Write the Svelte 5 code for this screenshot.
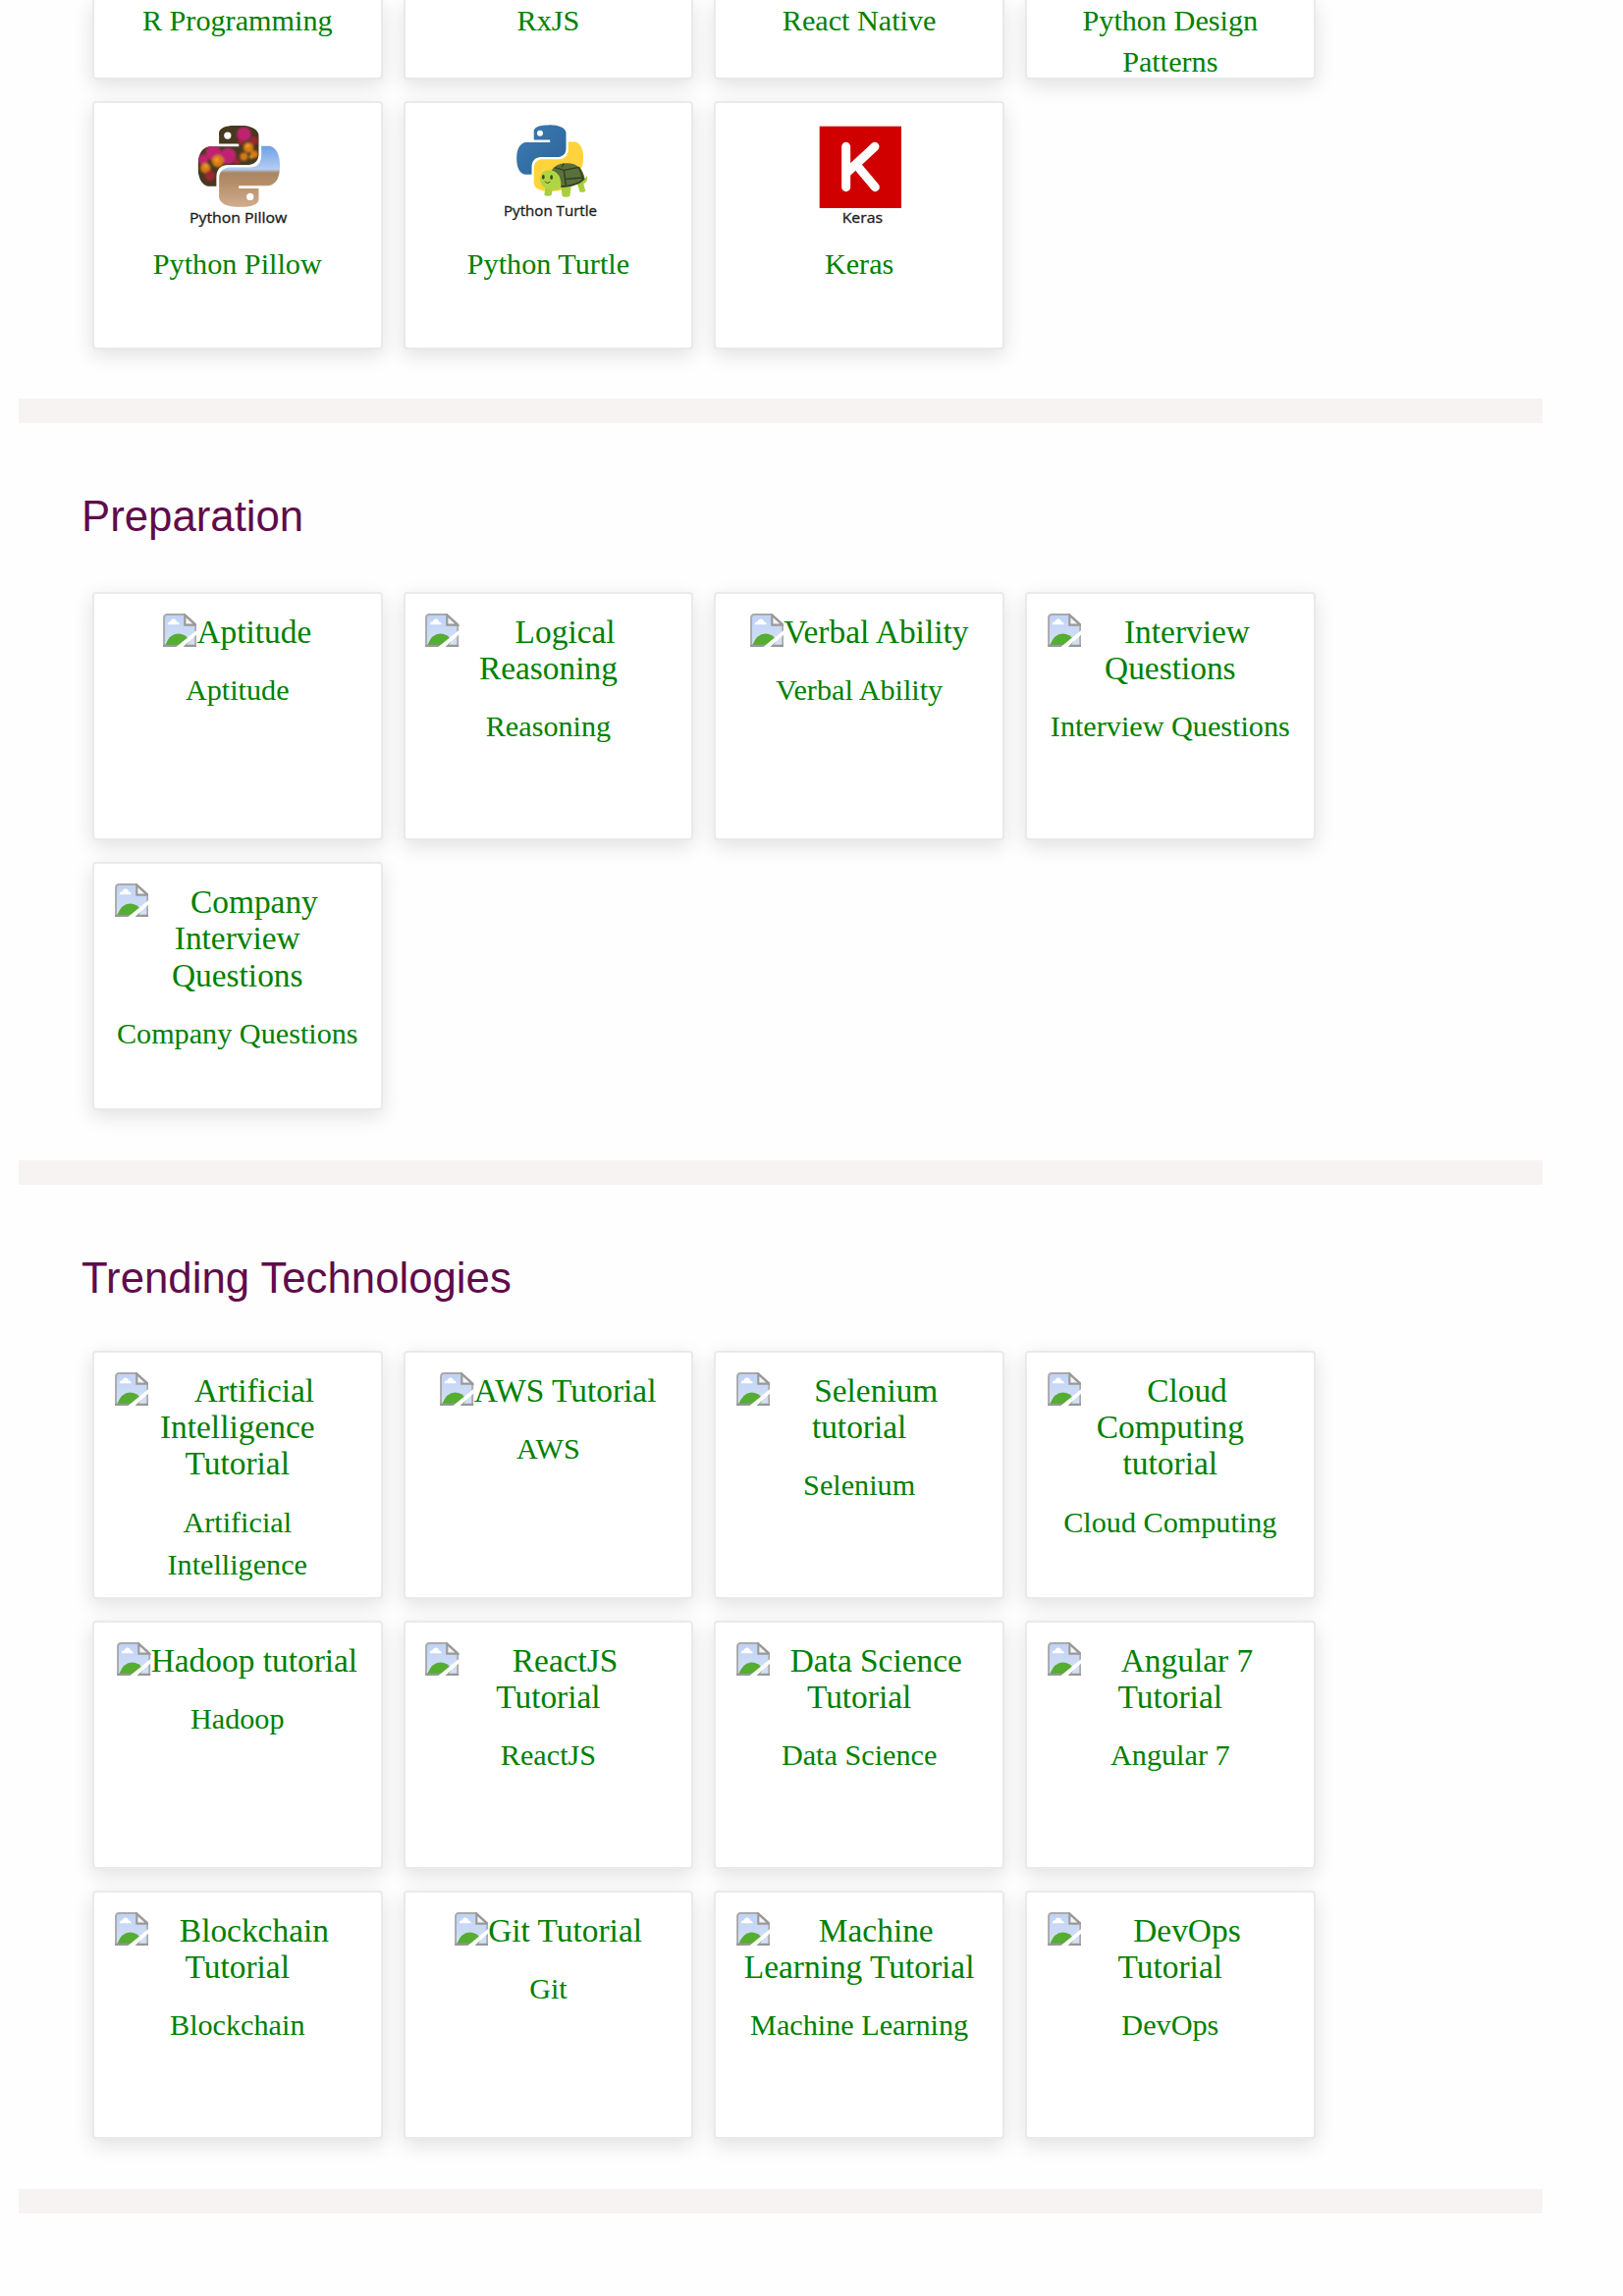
<script>
  const prep = [
    { alt: ['Aptitude'], name: ['Aptitude'] },
    { alt: ['Logical', 'Reasoning'], name: ['Reasoning'] },
    { alt: ['Verbal Ability'], name: ['Verbal Ability'] },
    { alt: ['Interview', 'Questions'], name: ['Interview Questions'] },
    { alt: ['Company', 'Interview', 'Questions'], name: ['Company Questions'] }
  ];
  const trending = [
    { alt: ['Artificial', 'Intelligence', 'Tutorial'], name: ['Artificial', 'Intelligence'] },
    { alt: ['AWS Tutorial'], name: ['AWS'] },
    { alt: ['Selenium', 'tutorial'], name: ['Selenium'] },
    { alt: ['Cloud', 'Computing', 'tutorial'], name: ['Cloud Computing'] },
    { alt: ['Hadoop tutorial'], name: ['Hadoop'] },
    { alt: ['ReactJS', 'Tutorial'], name: ['ReactJS'] },
    { alt: ['Data Science', 'Tutorial'], name: ['Data Science'] },
    { alt: ['Angular 7', 'Tutorial'], name: ['Angular 7'] },
    { alt: ['Blockchain', 'Tutorial'], name: ['Blockchain'] },
    { alt: ['Git Tutorial'], name: ['Git'] },
    { alt: ['Machine', 'Learning Tutorial'], name: ['Machine Learning'] },
    { alt: ['DevOps', 'Tutorial'], name: ['DevOps'] }
  ];
  const sections = [
    { id: 'preparation', title: 'Preparation', items: prep },
    { id: 'trending', title: 'Trending Technologies', items: trending }
  ];
  const snakeTop =
    'M14.25.18l.9.2.73.26.59.3.45.32.34.34.25.34.16.33.1.3.04.26.02.2-.01.13V8.5l-.05.63-.13.55-.21.46-.26.38-.3.31-.33.25-.35.19-.35.14-.33.1-.3.07-.26.04-.21.02H8.77l-.69.05-.59.14-.5.22-.41.27-.33.32-.27.35-.2.36-.15.37-.1.35-.07.32-.04.27-.02.21v3.06H3.17l-.21-.03-.28-.07-.32-.12-.35-.18-.36-.26-.36-.36-.35-.46-.32-.59-.28-.73-.21-.88-.14-1.05-.05-1.23.06-1.22.16-1.04.24-.87.32-.71.36-.57.4-.44.42-.33.42-.24.4-.16.36-.1.32-.05.24-.01h.16l.06.01h8.16v-.83H6.18l-.01-2.75-.02-.37.05-.34.11-.31.17-.28.25-.26.31-.23.38-.2.44-.18.51-.15.58-.12.64-.1.71-.06.77-.04.84-.02 1.27.05z';
  const snakeBottom =
    'M21.04 6.11l.28.06.32.12.35.18.36.27.36.35.35.47.32.59.28.73.21.88.14 1.04.05 1.23-.06 1.23-.16 1.04-.24.86-.32.71-.36.57-.4.45-.42.33-.42.24-.4.16-.36.09-.32.05-.24.02-.16-.01h-8.22v.82h5.84l.01 2.76.02.36-.05.34-.11.31-.17.29-.25.25-.31.24-.38.2-.44.17-.51.15-.58.13-.64.09-.71.07-.77.04-.84.01-1.27-.04-1.07-.14-.9-.2-.73-.25-.59-.3-.45-.33-.34-.34-.25-.34-.16-.33-.1-.3-.04-.25-.02-.2.01-.13v-5.34l.05-.64.13-.54.21-.46.26-.38.3-.32.33-.24.35-.2.35-.14.33-.1.3-.06.26-.04.21-.02.13-.01h5.84l.69-.05.59-.14.5-.21.41-.28.33-.32.27-.35.2-.36.15-.36.1-.35.07-.32.04-.28.02-.21V6.07h2.09l.14.01z';
</script>

{#snippet lines(list)}
  {#each list as line, i}{#if i > 0}<br />{/if}{line}{/each}
{/snippet}

{#snippet missing()}
  <svg class="missing" viewBox="0 0 16 16" aria-hidden="true">
    <defs>
      <linearGradient id="sky" x1="0" y1="0" x2="0" y2="1">
        <stop offset="0" stop-color="#bfd2f6" /><stop offset="1" stop-color="#d6e1f5" />
      </linearGradient>
    </defs>
    <path d="M2 .3h8.200l5.500 4.900v10.800H.3V2Q.3.3 2 .3z" fill="url(#sky)" />
    <path d="M2.200 5.300q0-1.300 1.300-1.400Q4 2.300 5.300 2.600q1.100.2 1.300 1.400 1.200.1 1.200 1.300z" fill="#fff" />
    <path d="M1 15.200q2.200-5.600 6.200-5.600 3.400 0 5.400 3.200L11 15.200z" fill="#55ad32" />
    <path d="M.5 15.500V2Q.5.500 2 .5h8.300l5.200 4.700V15.500z" fill="none" stroke="#aaa" stroke-width=".9" />
    <path d="M.1 15.400h15.800" stroke="#979797" stroke-width="1.200" />
    <path d="M10.400.8v4.600h5z" fill="#f4f4f4" stroke="#999" stroke-width="1" />
    <path d="M6.100 16h3.300L16 10V7.900z" fill="#fff" />
  </svg>
{/snippet}

<main>
  <section class="libraries">
    <div class="grid">
      <a class="card cut"><p>R Programming</p></a>
      <a class="card cut"><p>RxJS</p></a>
      <a class="card cut"><p>React Native</p></a>
      <a class="card cut"><p>Python Design<br />Patterns</p></a>

      <a class="card pic">
        <svg class="logo" viewBox="0 0 390 360">
          <defs>
            <clipPath id="snake-top"><path d={snakeTop} /></clipPath>
            <linearGradient id="desert" x1="0" y1="0" x2="0" y2="1">
              <stop offset="0" stop-color="#6f9fe6" />
              <stop offset=".38" stop-color="#b4cdf0" />
              <stop offset=".44" stop-color="#a98664" />
              <stop offset=".65" stop-color="#b8916c" />
              <stop offset="1" stop-color="#d0ad90" />
            </linearGradient>
            <filter id="petals" x="-20%" y="-20%" width="140%" height="140%"><feGaussianBlur stdDeviation=".25" /></filter>
          </defs>
          <g transform="translate(74 38) scale(10.400)">
            <g clip-path="url(#snake-top)">
              <rect width="24" height="18" fill="#46391f" />
              <g filter="url(#petals)">
                <g fill="#c0246f">
                  <circle cx="13.500" cy="2.600" r="2.100" /><circle cx="4.500" cy="8" r="2.300" />
                  <circle cx="8.800" cy="9" r="2.400" /><circle cx="1.500" cy="10" r="1.500" />
                </g>
                <g fill="#d87a17">
                  <circle cx="14.800" cy="6.500" r="1.500" /><circle cx="13.500" cy="9.200" r="1.200" />
                  <circle cx="5.800" cy="10.500" r="1.800" /><circle cx="2.200" cy="12.500" r="1.500" />
                  <circle cx="16.500" cy="8.500" r="1.100" />
                </g>
                <g fill="#9c2632">
                  <circle cx="3.500" cy="14.800" r="1.500" /><circle cx="16.500" cy="4.500" r="1.200" />
                  <circle cx="12.500" cy="5" r=".8" /><circle cx="11.500" cy="10.700" r=".9" />
                </g>
                <g fill="#f0a52b">
                  <circle cx="5.500" cy="10.200" r=".6" /><circle cx="14.600" cy="6" r=".6" />
                  <circle cx="2.300" cy="12" r=".5" /><circle cx="15.600" cy="9.300" r=".5" />
                </g>
              </g>
            </g>
            <path d={snakeBottom} fill="url(#desert)" />
            <circle cx="8.700" cy="3" r="1.050" fill="#fff" />
            <circle cx="15.300" cy="21" r="1.050" fill="#fff" />
          </g>
          <text x="48" y="336" textLength="298" lengthAdjust="spacingAndGlyphs">Python Pillow</text>
        </svg>
        <p>Python Pillow</p>
      </a>

      <a class="card pic">
        <svg class="logo" viewBox="0 0 390 360">
          <defs>
            <linearGradient id="blue" x1="0" y1="0" x2="1" y2="1">
              <stop offset="0" stop-color="#3b7cb3" /><stop offset="1" stop-color="#2c6498" />
            </linearGradient>
          </defs>
          <g transform="translate(18 -1)">
            <g transform="translate(82 38) scale(8.450)">
              <path d={snakeTop} fill="url(#blue)" />
              <path d={snakeBottom} fill="#ffd43b" />
              <circle cx="8.400" cy="3" r="1.050" fill="#fff" />
            </g>
            <path d="M170 226l-4 26q10 6 22 0l4-22zM217 228l4 28q12 5 23 0l4-30zM268 220l6 22q10 4 18-2l-6-22z" fill="#a8cf3c" />
            <path d="M270 212q18-2 27-20 4 18-12 27-10 5-20 2z" fill="#a8cf3c" />
            <path d="M188 178q14-25 48-23 46 1 54 48-14 22-70 26z" fill="#59703a" />
            <path d="M198 168l28 8 46-9M226 176l6 46M272 167l14 38M226 156l-6 10M232 203l52-4M216 226q46 0 72-24" fill="none" stroke="#303c20" stroke-width="4" />
            <path d="M153 203q2-26 28-27 28 2 34 28 6 22-3 31-14 5-32 0-27-7-27-32z" fill="#b0d544" />
            <ellipse cx="163" cy="197" rx="4" ry="7" fill="#3b4723" />
            <ellipse cx="188" cy="198" rx="4" ry="7" fill="#3b4723" />
            <path d="M168 210q7 10 16 1" fill="none" stroke="#3b4723" stroke-width="3" />
            <text x="42" y="315" textLength="285" lengthAdjust="spacingAndGlyphs">Python Turtle</text>
          </g>
        </svg>
        <p>Python Turtle</p>
      </a>

      <a class="card pic">
        <svg class="logo" viewBox="0 0 390 360">
          <g transform="translate(14 -2)">
            <rect x="60" y="43" width="250" height="250" fill="#d00000" />
            <path d="M141 105V229M229 105L145 183M172 160L230 229" fill="none" stroke="#fff" stroke-width="27" stroke-linecap="round" />
            <text x="129" y="338" textLength="124" lengthAdjust="spacingAndGlyphs">Keras</text>
          </g>
        </svg>
        <p>Keras</p>
      </a>
    </div>
  </section>
  <hr />

  {#each sections as s}
    <section class={s.id}>
      <h2>{s.title}</h2>
      <div class="grid">
        {#each s.items as item}
          <a class="card">
            <span class="alt" class:full={item.alt.length > 1}>{@render missing()}{@render lines(item.alt)}</span>
            <p>{@render lines(item.name)}</p>
          </a>
        {/each}
      </div>
    </section>
    <hr />
  {/each}
</main>

<style>
  :global(body) { background: #fefefe; }
  main {
    box-sizing: border-box;
    width: 1571px;
    height: 2339px;
    padding-left: 19px;
    overflow: hidden;
    font-family: 'Liberation Serif', serif;
    color: #008000;
  }
  section { box-sizing: border-box; padding-left: 64px; }
  .libraries { height: 406px; }
  .preparation { height: 751px; }
  .trending { height: 1023px; }
  hr { margin: 0; border: 0; height: 25px; background: #f7f3f3; }
  h2 {
    margin: 0;
    padding-top: 70px;
    height: 50px;
    font: 400 43.750px/50px 'Liberation Sans', sans-serif;
    color: #610b4b;
  }
  .grid {
    display: grid;
    grid-template-columns: repeat(4, 295.500px);
    column-gap: 21.200px;
    row-gap: 21.500px;
    padding-left: 11px;
  }
  .preparation .grid { padding-top: 51.500px; }
  .trending .grid { padding-top: 48.500px; }
  .card {
    box-sizing: border-box;
    height: 253.500px;
    padding: 20.500px 20.700px 0;
    border: 2px solid #ebe9e9;
    border-radius: 4px;
    background: #fff;
    box-shadow: 0 6px 20px rgba(0, 0, 0, 0.12);
    text-align: center;
    overflow: hidden;
  }
  .cut { height: 81px; padding-top: 0; border-top: 0; border-radius: 0 0 4px 4px; }
  .pic { padding-top: 10px; }
  .alt {
    display: inline-block;
    vertical-align: top;
    font-size: 33.400px;
    line-height: 37.400px;
    white-space: nowrap;
  }
  .trending .alt { margin-top: -0.500px; }
  .full { width: 100%; }
  .missing { float: left; width: 34.300px; height: 34.300px; }
  p {
    margin: 19.300px 0 0;
    font-size: 30.200px;
    line-height: 43px;
    white-space: nowrap;
  }
  .trending p { margin-top: 20px; }
  .cut p { margin-top: 1px; line-height: 41.500px; }
  .pic p { margin-top: 13px; }
  .logo { display: block; width: 130px; height: 120px; margin: 0 auto; }
  .logo text { font: 500 44px 'Open Sans', sans-serif; fill: #1c1c1c; stroke: #1c1c1c; stroke-width: 1px; }
</style>
